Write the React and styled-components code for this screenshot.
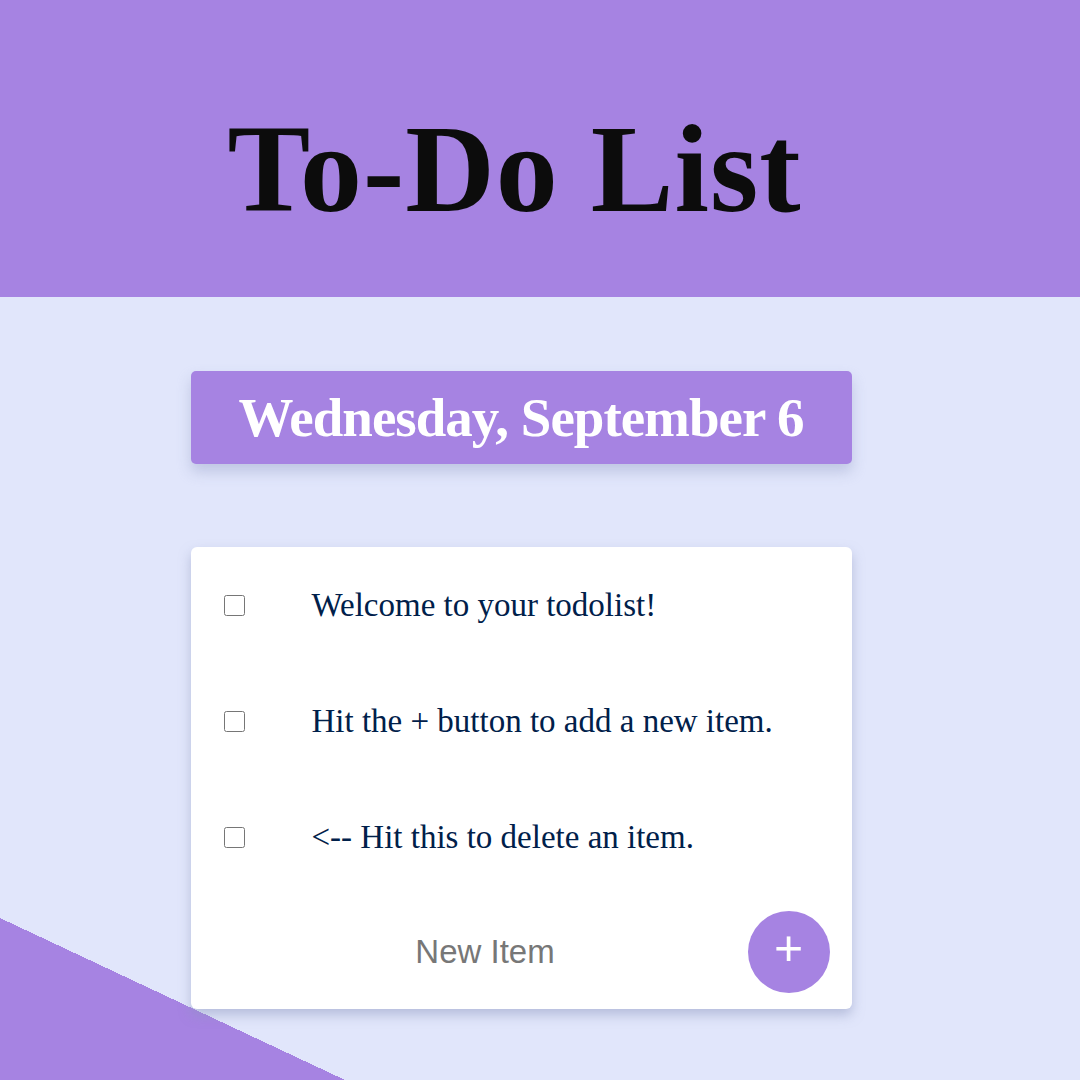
import React from 'react';
import styled, { createGlobalStyle } from 'styled-components';

const purple = '#a683e2';

const GlobalStyle = createGlobalStyle`
  html, body {
    margin: 0;
    padding: 0;
  }
  body {
    min-height: 100vh;
    background-color: #e1e6fb;
    background-image: linear-gradient(to top right, ${purple} 50%, transparent 50%);
    background-size: 345px 162px;
    background-position: left bottom;
    background-repeat: no-repeat;
    background-attachment: fixed;
  }
`;

const Header = styled.header`
  background: ${purple};
  height: 297px;
  box-sizing: border-box;
  padding-top: 108px;
`;

const Inner = styled.div`
  width: 1029px;
`;

const Title = styled.h1`
  margin: 0;
  text-align: center;
  font-family: "Liberation Serif", "Times New Roman", serif;
  font-weight: 700;
  font-size: 124px;
  line-height: 1;
  letter-spacing: 1px;
  color: #0c0c0c;
`;

const Main = styled.main`
  width: 1042px;
  display: flex;
  flex-direction: column;
  align-items: center;
  padding-top: 74px;
`;

const DateBox = styled.div`
  width: 661px;
  height: 93px;
  box-sizing: border-box;
  background: ${purple};
  border-radius: 5px;
  box-shadow: 0 8px 14px rgba(150, 160, 200, 0.45);
  display: flex;
  align-items: center;
  justify-content: center;
`;

const DateText = styled.h2`
  margin: 0;
  font-family: "Liberation Serif", "Times New Roman", serif;
  font-weight: 700;
  font-size: 55px;
  line-height: 1;
  letter-spacing: -1px;
  color: #ffffff;
`;

const Card = styled.div`
  margin-top: 83px;
  width: 661px;
  background: #ffffff;
  border-radius: 6px;
  box-shadow: 0 6px 12px rgba(140, 150, 190, 0.5);
`;

const Item = styled.div`
  height: 116px;
  display: flex;
  align-items: center;
`;

const Check = styled.input.attrs({ type: 'checkbox' })`
  width: 21px;
  height: 21px;
  margin: 0 0 0 33px;
`;

const ItemText = styled.p`
  margin: 0 0 0 67px;
  font-family: "Liberation Serif", "Times New Roman", serif;
  font-size: 33px;
  color: #00204a;
`;

const Form = styled.form`
  height: 114px;
  display: flex;
  align-items: center;
  padding-right: 22px;
`;

const NewItem = styled.input`
  flex: 1;
  min-width: 0;
  box-sizing: border-box;
  padding: 0 0 0 32px;
  border: none;
  outline: none;
  background: transparent;
  text-align: center;
  font-family: "Liberation Sans", Arial, sans-serif;
  font-size: 33px;
  color: #333;
  &::placeholder {
    color: #777777;
  }
`;

const AddButton = styled.button`
  width: 82px;
  height: 82px;
  flex-shrink: 0;
  border: none;
  border-radius: 50%;
  background: ${purple};
  color: #ffffff;
  font-family: "Liberation Sans", Arial, sans-serif;
  font-size: 50px;
  line-height: 1;
  padding: 0 0 9px 0;
  display: flex;
  align-items: center;
  justify-content: center;
`;

const items = [
  'Welcome to your todolist!',
  'Hit the + button to add a new item.',
  '<-- Hit this to delete an item.',
];

const App = () => {
  return (
    <>
      <GlobalStyle />
      <Header>
        <Inner>
          <Title>To-Do List</Title>
        </Inner>
      </Header>
      <Main>
        <DateBox>
          <DateText>Wednesday, September 6</DateText>
        </DateBox>
        <Card>
          {items.map((text) => (
            <Item key={text}>
              <Check />
              <ItemText>{text}</ItemText>
            </Item>
          ))}
          <Form onSubmit={(e) => e.preventDefault()}>
            <NewItem type="text" placeholder="New Item" autoComplete="off" />
            <AddButton type="submit">+</AddButton>
          </Form>
        </Card>
      </Main>
    </>
  );
};

export default App;
